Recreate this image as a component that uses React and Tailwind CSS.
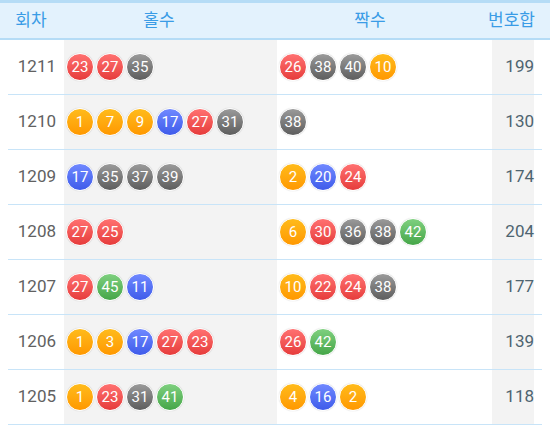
const rows = [
  { no: 1211, odd: [23, 27, 35], even: [26, 38, 40, 10], sum: 199 },
  { no: 1210, odd: [1, 7, 9, 17, 27, 31], even: [38], sum: 130 },
  { no: 1209, odd: [17, 35, 37, 39], even: [2, 20, 24], sum: 174 },
  { no: 1208, odd: [27, 25], even: [6, 30, 36, 38, 42], sum: 204 },
  { no: 1207, odd: [27, 45, 11], even: [10, 22, 24, 38], sum: 177 },
  { no: 1206, odd: [1, 3, 17, 27, 23], even: [26, 42], sum: 139 },
  { no: 1205, odd: [1, 23, 31, 41], even: [4, 16, 2], sum: 118 },
];

// lotto ball colours by number range
function ballColor(n) {
  if (n <= 10) return 'from-[#ffbb1a] to-[#ff9800]';
  if (n <= 20) return 'from-[#7088ff] to-[#3f5bea]';
  if (n <= 30) return 'from-[#ff7070] to-[#e63b3b]';
  if (n <= 40) return 'from-[#9a9a9a] to-[#5e5e5e]';
  return 'from-[#7ed07f] to-[#45a648]';
}

const Ball = ({ n }) => (
  <div
    className={`w-[28px] h-[28px] rounded-full border-[1.5px] border-white bg-linear-to-b ${ballColor(n)} shadow-[0_0_1px_rgba(0,0,0,0.25)] flex items-center justify-center text-white text-[15px] leading-none`}
  >
    {n}
  </div>
);

const App = () => {
  return (
    <div className="w-[550px] h-[426px] bg-white overflow-hidden" style={{ fontFamily: 'Roboto, "Noto Sans CJK KR", sans-serif' }}>
      <div className="h-[40px] bg-[#e3f2fd] border-t-[3px] border-b-2 border-[#b5dcf6] flex items-center text-[17px] text-[#3a9ce6]">
        <div className="w-[62px] text-center">회차</div>
        <div className="w-[194px] text-center">홀수</div>
        <div className="w-[228px] text-center">짝수</div>
        <div className="w-[51px] text-right">번호합</div>
      </div>
      {rows.map((r) => (
        <div key={r.no} className="mx-2 h-[55px] border-b border-[#c8e4f8] flex">
          <div className="w-[56px] flex items-center justify-end pr-[8px] text-[17px] text-[#616161]">{r.no}</div>
          <div className="w-[213px] bg-[#f3f3f3] flex items-center gap-[2px] pl-[2px]">
            {r.odd.map((n, i) => (
              <Ball key={i} n={n} />
            ))}
          </div>
          <div className="w-[215px] flex items-center gap-[2px] pl-[2px]">
            {r.even.map((n, i) => (
              <Ball key={i} n={n} />
            ))}
          </div>
          <div className="w-[42px] bg-[#f3f3f3] flex items-center justify-end text-[17px] text-[#4e6470]">{r.sum}</div>
        </div>
      ))}
    </div>
  );
};

export default App;
